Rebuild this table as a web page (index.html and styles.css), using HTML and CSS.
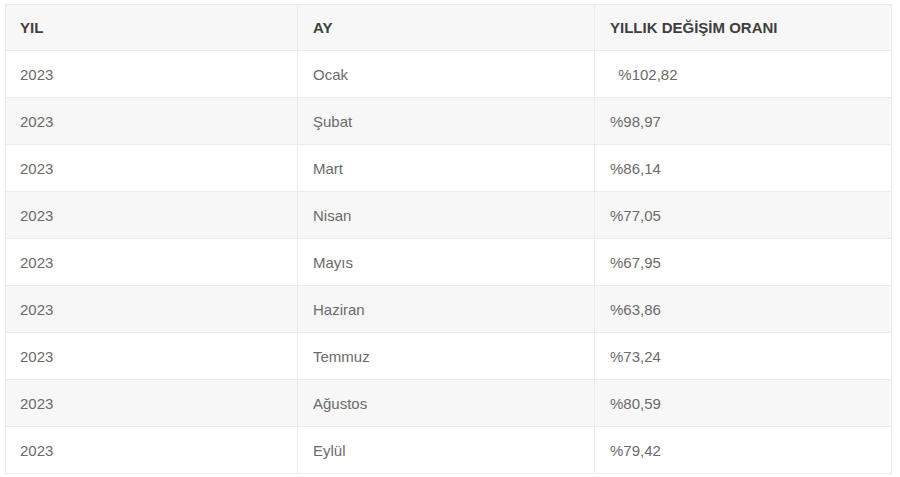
FILE: index.html
```html
<!DOCTYPE html>
<html lang="tr">
<head>
<meta charset="utf-8">
<link rel="stylesheet" href="styles.css">
</head>
<body>
<div class="wrap">
<table class="data">
<thead>
<tr><th>YIL</th><th>AY</th><th>YILLIK DEĞİŞİM ORANI</th></tr>
</thead>
<tbody>
<tr><td>2023</td><td>Ocak</td><td>&nbsp; %102,82</td></tr>
<tr><td>2023</td><td>Şubat</td><td>%98,97</td></tr>
<tr><td>2023</td><td>Mart</td><td>%86,14</td></tr>
<tr><td>2023</td><td>Nisan</td><td>%77,05</td></tr>
<tr><td>2023</td><td>Mayıs</td><td>%67,95</td></tr>
<tr><td>2023</td><td>Haziran</td><td>%63,86</td></tr>
<tr><td>2023</td><td>Temmuz</td><td>%73,24</td></tr>
<tr><td>2023</td><td>Ağustos</td><td>%80,59</td></tr>
<tr><td>2023</td><td>Eylül</td><td>%79,42</td></tr>
</tbody>
</table>
</div>
</body>
</html>
```
FILE: styles.css
```css
html, body { margin: 0; padding: 0; background: #fff; }
.wrap { padding: 4px 8px 0 5px; }
.data {
  width: 887px;
  border-collapse: collapse;
  font-family: "Liberation Sans", Arial, sans-serif;
  font-size: 15px;
  table-layout: fixed;
}
.data th, .data td {
  border: 1px solid #ebebeb;
  height: 47px;
  padding: 0 14px;
  text-align: left;
  box-sizing: border-box;
}
.data th {
  height: 46px;
  color: #3f3f3f;
  font-weight: bold;
  background: #f7f7f7;
}
.data td { color: #6b6b6b; }
.data tbody tr:nth-child(even) td { background: #f7f7f7; }
.data tbody tr:nth-child(odd) td { background: #fff; }
.data th:nth-child(1), .data td:nth-child(1) { width: 292px; }
.data th:nth-child(2), .data td:nth-child(2) { width: 297px; }
.data th:nth-child(2), .data td:nth-child(2),
.data th:nth-child(3), .data td:nth-child(3) { padding-left: 15px; }
```
